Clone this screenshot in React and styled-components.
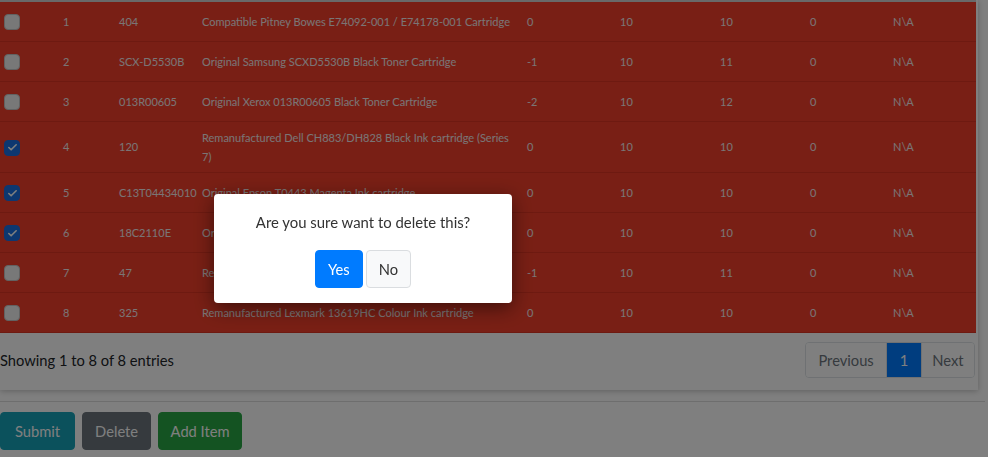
import React from 'react'
import styled, { createGlobalStyle } from 'styled-components'
import { Check } from 'lucide-react'

const GlobalStyle = createGlobalStyle`
  html, body {
    margin: 0;
    padding: 0;
    background: #fff;
    overflow: hidden;
  }
  body {
    font-family: Lato, "Noto Sans", sans-serif;
    color: #212529;
  }
`

const Page = styled.div`
  width: 988px;
  height: 457px;
  overflow: hidden;
`

const Card = styled.div`
  width: 978px;
  background: #fff;
  box-shadow: 0 1px 6px rgba(0, 0, 0, 0.25);
`

const Table = styled.table`
  width: 976px;
  border-collapse: collapse;
  table-layout: fixed;
  border-top: 2px solid #d2d2d2;
  font-size: 11px;
`

const Row = styled.tr`
  background: #f33f2a;
  border-bottom: 1px solid #dc3422;
  height: 40px;
`

const Cell = styled.td`
  padding: 6px 8px;
  color: #f4eaea;
  vertical-align: middle;
  line-height: 19px;
  white-space: nowrap;
  &:first-child {
    padding-left: 4px;
  }
`

const Box = styled.span`
  display: flex;
  align-items: center;
  justify-content: center;
  width: 16px;
  height: 16px;
  margin-top: 2px;
  box-sizing: border-box;
  border-radius: 4px;
  background: ${p => (p.checked ? '#1a6fe0' : '#f0f0f0')};
  border: 1px solid ${p => (p.checked ? '#1a6fe0' : '#c4c4c4')};
  color: #fff;
`

const Footer = styled.div`
  display: flex;
  align-items: center;
  justify-content: space-between;
  padding: 9px 3px 12px 0;
`

const Info = styled.div`
  font-size: 14.7px;
  color: #212529;
`

const Pager = styled.div`
  display: flex;
  border: 1px solid #dee2e6;
  border-radius: 4px;
  overflow: hidden;
  height: 36px;
  box-sizing: border-box;
`

const PageItem = styled.div`
  display: flex;
  align-items: center;
  padding: 0 ${p => p.pad}px;
  font-size: 14.7px;
  color: ${p => (p.active ? '#fff' : '#6c757d')};
  background: ${p => (p.active ? '#007bff' : '#fff')};
  & + & {
    border-left: 1px solid #dee2e6;
  }
`

const Rule = styled.hr`
  margin: 11px 3px 10px 0;
  border: 0;
  border-top: 1px solid #dcdcdc;
`

const Actions = styled.div`
  display: flex;
  gap: 7px;
`

const Button = styled.button`
  height: 38px;
  padding: 0 ${p => p.pad || 12}px;
  border: 1px solid transparent;
  border-radius: 4px;
  font-family: inherit;
  font-size: 14.7px;
  color: ${p => p.fg || '#fff'};
  background: ${p => p.bg};
  border-color: ${p => p.bd || p.bg};
`

const Backdrop = styled.div`
  position: fixed;
  inset: 0;
  background: rgba(0, 0, 0, 0.5);
`

const Modal = styled.div`
  position: fixed;
  left: 214px;
  top: 194px;
  width: 298px;
  height: 109px;
  background: #fff;
  border-radius: 4px;
  box-shadow: 0 5px 20px rgba(0, 0, 0, 0.5);
  display: flex;
  flex-direction: column;
  align-items: center;
  box-sizing: border-box;
  padding-top: 18px;
`

const Question = styled.div`
  font-size: 14.9px;
  color: #333;
  line-height: 20px;
`

const ModalButtons = styled.div`
  display: flex;
  gap: 3px;
  margin-top: 18px;
`

const widths = [55, 56, 83, 325, 93, 100, 90, 83, 91]

const items = [
  { n: 1, code: '404', name: 'Compatible Pitney Bowes E74092-001 / E74178-001 Cartridge', a: 0, b: 10, c: 10, d: 0 },
  { n: 2, code: 'SCX-D5530B', name: 'Original Samsung SCXD5530B Black Toner Cartridge', a: -1, b: 10, c: 11, d: 0 },
  { n: 3, code: '013R00605', name: 'Original Xerox 013R00605 Black Toner Cartridge', a: -2, b: 10, c: 12, d: 0 },
  { n: 4, code: '120', name: ['Remanufactured Dell CH883/DH828 Black Ink cartridge (Series', '7)'], a: 0, b: 10, c: 10, d: 0, checked: true },
  { n: 5, code: 'C13T04434010', name: 'Original Epson T0443 Magenta Ink cartridge', a: 0, b: 10, c: 10, d: 0, checked: true },
  { n: 6, code: '18C2110E', name: 'Original Lexmark 18C2110E Black Ink cartridge', a: 0, b: 10, c: 10, d: 0, checked: true },
  { n: 7, code: '47', name: 'Remanufactured HP 47 Black Ink cartridge', a: -1, b: 10, c: 11, d: 0 },
  { n: 8, code: '325', name: 'Remanufactured Lexmark 13619HC Colour Ink cartridge', a: 0, b: 10, c: 10, d: 0 },
]

export default function App() {
  return (
    <>
      <GlobalStyle />
      <Page>
        <Card>
          <Table>
            <colgroup>
              {widths.map((w, i) => <col key={i} style={{ width: w }} />)}
            </colgroup>
            <tbody>
              {items.map(it => (
                <Row key={it.n}>
                  <Cell>
                    <Box checked={it.checked}>{it.checked && <Check size={11} strokeWidth={3.5} />}</Box>
                  </Cell>
                  <Cell>{it.n}</Cell>
                  <Cell>{it.code}</Cell>
                  <Cell>{Array.isArray(it.name) ? <>{it.name[0]}<br />{it.name[1]}</> : it.name}</Cell>
                  <Cell>{it.a}</Cell>
                  <Cell>{it.b}</Cell>
                  <Cell>{it.c}</Cell>
                  <Cell>{it.d}</Cell>
                  <Cell>N\A</Cell>
                </Row>
              ))}
            </tbody>
          </Table>
          <Footer>
            <Info>Showing 1 to 8 of 8 entries</Info>
            <Pager>
              <PageItem pad={12.5}>Previous</PageItem>
              <PageItem pad={12.5} active>1</PageItem>
              <PageItem pad={10.5}>Next</PageItem>
            </Pager>
          </Footer>
        </Card>
        <Rule />
        <Actions>
          <Button bg="#17a2b8" pad={14}>Submit</Button>
          <Button bg="#6c757d" pad={12}>Delete</Button>
          <Button bg="#28a745" pad={11.5}>Add Item</Button>
        </Actions>
      </Page>
      <Backdrop />
      <Modal>
        <Question>Are you sure want to delete this?</Question>
        <ModalButtons>
          <Button bg="#007bff" pad={12}>Yes</Button>
          <Button bg="#f8f9fa" bd="#dadde0" fg="#333" pad={12}>No</Button>
        </ModalButtons>
      </Modal>
    </>
  )
}
